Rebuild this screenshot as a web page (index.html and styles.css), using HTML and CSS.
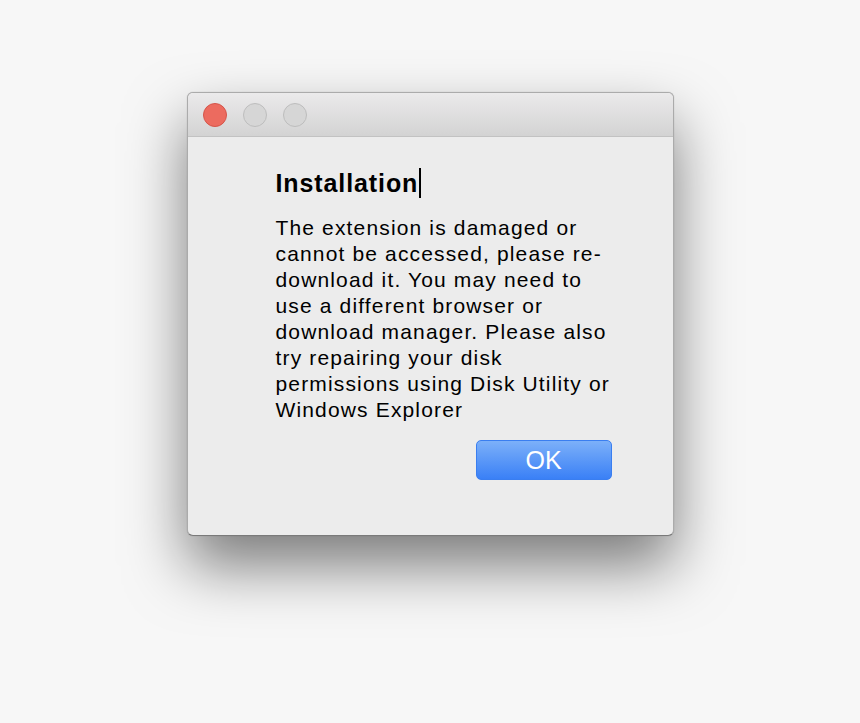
FILE: index.html
```html
<!DOCTYPE html>
<html>
<head>
<meta charset="utf-8">
<title>Installation</title>
<link rel="stylesheet" href="styles.css">
</head>
<body>
<div class="stage">
  <div class="window">
    <div class="titlebar">
      <span class="light close"></span>
      <span class="light"></span>
      <span class="light"></span>
    </div>
    <div class="content">
      <h1 class="heading">Installation<span class="caret"></span></h1>
      <p class="message">The extension is damaged or cannot be accessed, please re-download it. You may need to use a different browser or download manager. Please also try repairing your disk permissions using Disk Utility or Windows Explorer</p>
      <div class="actions">
        <button class="ok">OK</button>
      </div>
    </div>
  </div>
</div>
</body>
</html>
```
FILE: styles.css
```css
html, body {
  margin: 0;
  height: 100%;
  background: #f7f7f7;
  font-family: "Liberation Sans", Arial, sans-serif;
}

.stage {
  display: flex;
  justify-content: center;
  padding-top: 92px;
}

.window {
  width: 487px;
  height: 444px;
  box-sizing: border-box;
  background: #ececec;
  border: 1px solid #ababab;
  border-bottom-color: #7a7a7a;
  border-radius: 6px;
  overflow: hidden;
  box-shadow: 0 30px 60px rgba(0, 0, 0, 0.5), 0 0 1px rgba(0, 0, 0, 0.3);
}

.titlebar {
  height: 43px;
  display: flex;
  align-items: center;
  gap: 16px;
  padding-left: 15px;
  background: linear-gradient(#ebeaeb, #d3d3d3);
  border-bottom: 1px solid #c2c2c2;
}

.light {
  width: 22px;
  height: 22px;
  border-radius: 50%;
  background: #d6d6d6;
  border: 1px solid #bdbdbd;
}

.light.close {
  background: #ec6b5f;
  border-color: #d5554a;
}

.content {
  padding: 30px 57px 0 88px;
}

.heading {
  margin: 0;
  font-size: 25px;
  font-weight: bold;
  letter-spacing: 0.9px;
  color: #000;
  line-height: 32px;
}

.caret {
  display: inline-block;
  width: 2px;
  height: 30px;
  margin-left: 1px;
  background: #000;
  vertical-align: -6px;
}

.message {
  margin: 16px 0 0;
  font-size: 21px;
  letter-spacing: 1.15px;
  line-height: 26px;
  color: #000;
}

.actions {
  display: flex;
  justify-content: flex-end;
  margin-top: 17px;
  padding-right: 4px;
}

.ok {
  width: 136px;
  height: 40px;
  border: 1px solid #3a7ef0;
  border-radius: 5px;
  background: linear-gradient(#7cb0f9, #3a80f6);
  color: #fff;
  font-family: inherit;
  font-size: 25px;
}
```
